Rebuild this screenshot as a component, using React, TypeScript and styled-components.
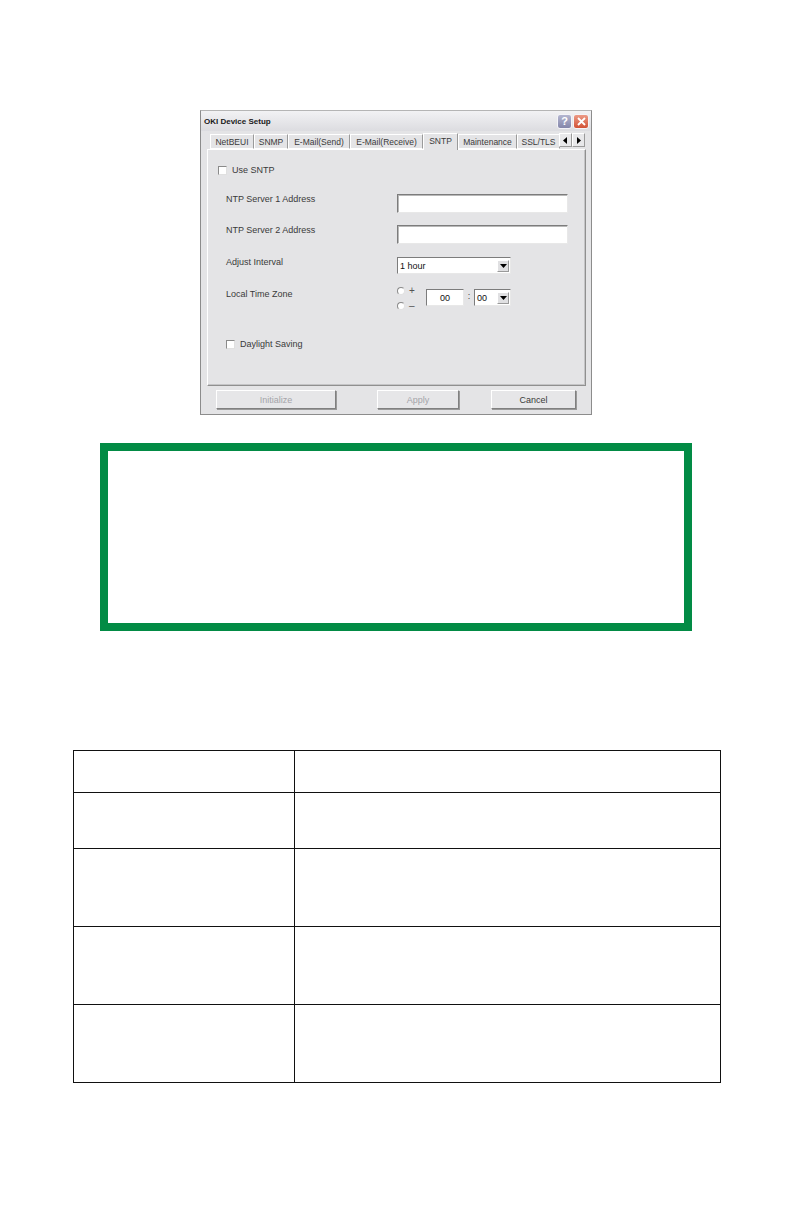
import React from "react"
import styled, { createGlobalStyle } from "styled-components"

const GlobalStyle = createGlobalStyle`
    html, body {
        margin: 0;
        padding: 0;
        background: #ffffff;
    }
    body {
        font-family: "Liberation Sans", Arial, sans-serif;
    }
`

const tabs = [
    { label: "NetBEUI", width: 44 },
    { label: "SNMP", width: 34 },
    { label: "E-Mail(Send)", width: 62 },
    { label: "E-Mail(Receive)", width: 73 },
    { label: "SNTP", width: 35, active: true },
    { label: "Maintenance", width: 59 },
    { label: "SSL/TLS", width: 43 },
]

const tableRows = [42, 56, 78, 78, 78]

export default function App() {
    return (
        <Page>
            <GlobalStyle />
            <Dialog>
                <TitleBar>
                    <Title>OKI Device Setup</Title>
                    <TitleButtons>
                        <HelpButton>?</HelpButton>
                        <CloseButton>
                            <svg width="9" height="9" viewBox="0 0 9 9">
                                <path d="M1 1 L8 8 M8 1 L1 8" stroke="#ffffff" strokeWidth="1.8" />
                            </svg>
                        </CloseButton>
                    </TitleButtons>
                </TitleBar>
                <TabStrip>
                    {tabs.map(t => (
                        <Tab key={t.label} $width={t.width} $active={!!t.active}>{t.label}</Tab>
                    ))}
                    <ScrollArrows>
                        <ArrowBtn>
                            <svg width="5" height="7" viewBox="0 0 5 7"><path d="M4 0 L0 3.5 L4 7 Z" fill="#000" /></svg>
                        </ArrowBtn>
                        <ArrowBtn>
                            <svg width="5" height="7" viewBox="0 0 5 7"><path d="M1 0 L5 3.5 L1 7 Z" fill="#000" /></svg>
                        </ArrowBtn>
                    </ScrollArrows>
                </TabStrip>
                <Panel>
                    <CheckRow $top={13} $indent={10}>
                        <CheckBox />
                        <span>Use SNTP</span>
                    </CheckRow>
                    <FieldRow $top={17} $height={19}>
                        <Label>NTP Server 1 Address</Label>
                        <TextInput $width={171} />
                    </FieldRow>
                    <FieldRow $top={12} $height={19}>
                        <Label>NTP Server 2 Address</Label>
                        <TextInput $width={171} />
                    </FieldRow>
                    <FieldRow $top={13} $height={17}>
                        <Label>Adjust Interval</Label>
                        <Select $width={114}>
                            <SelectValue>1 hour</SelectValue>
                            <DropButton>
                                <svg width="7" height="4" viewBox="0 0 7 4"><path d="M0 0 L7 0 L3.5 4 Z" fill="#000" /></svg>
                            </DropButton>
                        </Select>
                    </FieldRow>
                    <FieldRow $top={15} $height={30}>
                        <Label>Local Time Zone</Label>
                        <ZoneControls>
                            <RadioStack>
                                <RadioRow><Radio />+</RadioRow>
                                <RadioRow><Radio />–</RadioRow>
                            </RadioStack>
                            <HourInput>00</HourInput>
                            <Colon>:</Colon>
                            <Select $width={37} $height={17}>
                                <SelectValue>00</SelectValue>
                                <DropButton>
                                    <svg width="7" height="4" viewBox="0 0 7 4"><path d="M0 0 L7 0 L3.5 4 Z" fill="#000" /></svg>
                                </DropButton>
                            </Select>
                        </ZoneControls>
                    </FieldRow>
                    <CheckRow $top={18} $indent={18}>
                        <CheckBox />
                        <span>Daylight Saving</span>
                    </CheckRow>
                </Panel>
                <ButtonBar>
                    <DlgButton $width={120} $disabled>Initialize</DlgButton>
                    <DlgButton $width={82} $disabled style={{ marginLeft: 41 }}>Apply</DlgButton>
                    <DlgButton $width={85} style={{ marginLeft: 32 }}>Cancel</DlgButton>
                </ButtonBar>
            </Dialog>

            <NoteBox />

            <Table>
                <tbody>
                    {tableRows.map((h, i) => (
                        <tr key={i} style={{ height: h }}>
                            <LeftCell />
                            <RightCell />
                        </tr>
                    ))}
                </tbody>
            </Table>
        </Page>
    )
}

const Page = styled.div`
    width: 792px;
    height: 1224px;
    box-sizing: border-box;
    padding-top: 110px;
    display: flex;
    flex-direction: column;
    align-items: center;
`

const Dialog = styled.div`
    width: 392px;
    height: 305px;
    box-sizing: border-box;
    border: 1px solid #8c8c8c;
    border-top-color: #b5b5b5;
    background: #e4e4e6;
    display: flex;
    flex-direction: column;
    font-family: "Liberation Sans", Arial, sans-serif;
    font-size: 9px;
    color: #3a3a3a;
`

const TitleBar = styled.div`
    height: 20px;
    display: flex;
    align-items: center;
    justify-content: space-between;
    padding: 0 2px 0 3px;
    background: linear-gradient(#f2f2f4, #dcdce0);
`

const Title = styled.div`
    font-weight: bold;
    font-size: 8px;
    color: #1a1a1a;
`

const TitleButtons = styled.div`
    display: flex;
    gap: 1px;
`

const HelpButton = styled.div`
    width: 15px;
    height: 15px;
    box-sizing: border-box;
    border: 1px solid #f4f4f8;
    border-radius: 3px;
    background: linear-gradient(#b4b6d0, #8486aa);
    color: #fff;
    font-weight: bold;
    font-size: 11px;
    display: flex;
    align-items: center;
    justify-content: center;
`

const CloseButton = styled(HelpButton)`
    width: 16px;
    background: linear-gradient(#ec9a86, #d25236);
`

const TabStrip = styled.div`
    display: flex;
    align-items: flex-end;
    height: 17px;
    padding-left: 9px;
    margin-top: 1px;
    position: relative;
    z-index: 1;
`

const Tab = styled.div<{ $width: number; $active: boolean }>`
    width: ${p => p.$width}px;
    height: ${p => (p.$active ? 17 : 15)}px;
    box-sizing: border-box;
    flex-shrink: 0;
    display: flex;
    align-items: center;
    justify-content: center;
    white-space: nowrap;
    overflow: hidden;
    border: 1px solid #9a9a9a;
    border-left-color: #ffffff;
    border-top-color: #ffffff;
    border-bottom: ${p => (p.$active ? "none" : "1px solid #ffffff")};
    background: #e4e4e6;
    margin-bottom: ${p => (p.$active ? -1 : 0)}px;
    padding-bottom: ${p => (p.$active ? 2 : 0)}px;
    font-size: 8.5px;
    color: #3a3a3a;
`

const ScrollArrows = styled.div`
    display: flex;
    margin-bottom: 2px;
    margin-left: -1px;
`

const ArrowBtn = styled.div`
    width: 13px;
    height: 14px;
    box-sizing: border-box;
    border: 1px solid #9a9a9a;
    border-left-color: #fff;
    border-top-color: #fff;
    background: #e8e8ea;
    display: flex;
    align-items: center;
    justify-content: center;
`

const Panel = styled.div`
    margin: 0 5px 0 6px;
    height: 237px;
    box-sizing: border-box;
    border: 1px solid #8f8f8f;
    border-top-color: #ffffff;
    border-left-color: #ffffff;
    box-shadow: inset -1px -1px 0 #c4c4c6;
    display: flex;
    flex-direction: column;
`

const CheckRow = styled.div<{ $top: number; $indent: number }>`
    margin-top: ${p => p.$top}px;
    padding-left: ${p => p.$indent}px;
    height: 14px;
    display: flex;
    align-items: center;
    gap: 5px;
`

const CheckBox = styled.div`
    width: 9px;
    height: 9px;
    box-sizing: border-box;
    border: 1px solid #8a8a8a;
    border-right-color: #e0e0e0;
    border-bottom-color: #e0e0e0;
    background: #ffffff;
`

const FieldRow = styled.div<{ $top: number; $height: number }>`
    margin-top: ${p => p.$top}px;
    height: ${p => p.$height}px;
    padding-left: 18px;
    display: flex;
    align-items: flex-start;
`

const Label = styled.div`
    width: 171px;
    flex-shrink: 0;
    line-height: 11px;
`

const TextInput = styled.div<{ $width: number }>`
    width: ${p => p.$width}px;
    height: 19px;
    box-sizing: border-box;
    border: 1px solid #7c7c7c;
    border-right-color: #e8e8e8;
    border-bottom-color: #e8e8e8;
    box-shadow: inset 1px 1px 0 #b8b8b8;
    background: #ffffff;
`

const Select = styled.div<{ $width: number; $height?: number }>`
    width: ${p => p.$width}px;
    height: ${p => p.$height ?? 17}px;
    box-sizing: border-box;
    border: 1px solid #7c7c7c;
    border-right-color: #e8e8e8;
    border-bottom-color: #e8e8e8;
    background: #ffffff;
    display: flex;
    align-items: center;
    justify-content: space-between;
    padding: 1px;
`

const SelectValue = styled.span`
    font-size: 9px;
    color: #111;
    padding-left: 1px;
`

const DropButton = styled.div`
    width: 12px;
    height: 12px;
    box-sizing: border-box;
    border: 1px solid #9a9a9a;
    border-left-color: #fff;
    border-top-color: #fff;
    background: #e0e0e2;
    display: flex;
    align-items: center;
    justify-content: center;
`

const ZoneControls = styled.div`
    display: flex;
    align-items: flex-start;
`

const RadioStack = styled.div`
    display: flex;
    flex-direction: column;
    gap: 4px;
    width: 29px;
    margin-top: -4px;
`

const RadioRow = styled.div`
    display: flex;
    align-items: center;
    gap: 4px;
    height: 11px;
    font-size: 10px;
    color: #555;
`

const Radio = styled.div`
    width: 8px;
    height: 8px;
    box-sizing: border-box;
    border-radius: 50%;
    border: 1px solid #8a8a8a;
    border-right-color: #e2e2e2;
    border-bottom-color: #e2e2e2;
    background: #ffffff;
`

const HourInput = styled.div`
    width: 38px;
    height: 17px;
    box-sizing: border-box;
    border: 1px solid #7c7c7c;
    border-right-color: #e8e8e8;
    border-bottom-color: #e8e8e8;
    background: #ffffff;
    display: flex;
    align-items: center;
    justify-content: center;
    color: #111;
`

const Colon = styled.span`
    width: 10px;
    text-align: center;
    line-height: 14px;
`

const ButtonBar = styled.div`
    display: flex;
    padding: 4px 0 0 15px;
`

const DlgButton = styled.div<{ $width: number; $disabled?: boolean }>`
    width: ${p => p.$width}px;
    height: 19px;
    box-sizing: border-box;
    border: 1px solid #808080;
    border-left-color: #ffffff;
    border-top-color: #ffffff;
    box-shadow: 1px 1px 0 #9a9a9a;
    background: #e6e6e8;
    display: flex;
    align-items: center;
    justify-content: center;
    color: ${p => (p.$disabled ? "#a4a4a8" : "#3a3a3a")};
`

const NoteBox = styled.div`
    margin-top: 28px;
    width: 592px;
    height: 188px;
    box-sizing: border-box;
    border: 8px solid #028b45;
    background: #ffffff;
`

const Table = styled.table`
    margin-top: 119px;
    width: 648px;
    border-collapse: collapse;
    margin-left: 1px;
`

const LeftCell = styled.td`
    width: 220px;
    border: 1.5px solid #111;
    padding: 0;
`

const RightCell = styled.td`
    border: 1.5px solid #111;
    padding: 0;
`
